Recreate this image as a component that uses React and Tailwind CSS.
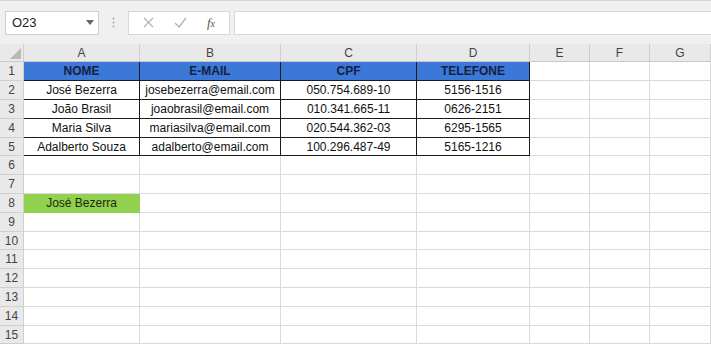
import { useState } from "react";

const cols = [
  { name: "A", w: "w-[116px]" },
  { name: "B", w: "w-[141px]" },
  { name: "C", w: "w-[136px]" },
  { name: "D", w: "w-[113px]" },
  { name: "E", w: "w-[60px]" },
  { name: "F", w: "w-[60px]" },
  { name: "G", w: "w-[61px]" },
];

const rowHeights = ["h-[19px]", "h-[19px]", "h-[19px]", "h-[19px]", "h-[18px]"];

const data = [
  ["NOME", "E-MAIL", "CPF", "TELEFONE"],
  ["José Bezerra", "josebezerra@email.com", "050.754.689-10", "5156-1516"],
  ["João Brasil", "joaobrasil@email.com", "010.341.665-11", "0626-2151"],
  ["Maria Silva", "mariasilva@email.com", "020.544.362-03", "6295-1565"],
  ["Adalberto Souza", "adalberto@email.com", "100.296.487-49", "5165-1216"],
];

function Cell({ row, col, value }) {
  let cls = "border-r border-b border-[#dadada] bg-white text-[#111]";
  if (row === 1 && col < 4) {
    cls = "border-r border-b border-[#1b1b1b] bg-[#3b78d8] font-bold text-[#14213d]";
  } else if (row >= 2 && row <= 5 && col < 4) {
    cls = "border-r border-b border-[#1b1b1b] bg-white text-[#111]";
  } else if (row === 8 && col === 0) {
    cls = "border-r border-b border-[#92d050] bg-[#92d050] text-[#1a2a0a]";
  }
  return (
    <div className={`${cols[col].w} shrink-0 flex items-center justify-center ${cls}`}>
      {value}
    </div>
  );
}

export default function App() {
  const [cellRef] = useState("O23");
  const rows = Array.from({ length: 15 }, (_, i) => i + 1);

  return (
    <div className="w-[711px] h-[346px] overflow-hidden bg-white text-[12px] font-['Liberation_Sans',Arial,sans-serif]">
      {/* formula bar */}
      <div className="h-[44px] bg-[#f0f0f0] border-t border-[#d6d6d6] flex items-center pl-[5px] gap-0">
        <div className="w-[94px] h-[24px] bg-white border border-[#d0d0d0] flex items-center justify-between pl-[6px] pr-[4px] text-[13px] text-[#222]">
          <span>{cellRef}</span>
          <svg width="8" height="5" viewBox="0 0 8 5"><path d="M0 0h8L4 5z" fill="#666" /></svg>
        </div>
        <div className="w-[29px] flex justify-center">
          <svg width="3" height="11" viewBox="0 0 3 11">
            <circle cx="1.5" cy="1.5" r="1" fill="#aaa" />
            <circle cx="1.5" cy="5.5" r="1" fill="#aaa" />
            <circle cx="1.5" cy="9.5" r="1" fill="#aaa" />
          </svg>
        </div>
        <div className="w-[102px] h-[24px] bg-white border border-[#d8d8d8] flex items-center justify-around px-[4px]">
          <svg width="11" height="11" viewBox="0 0 11 11"><path d="M1 1l9 9M10 1l-9 9" stroke="#b5b5b5" strokeWidth="1.3" /></svg>
          <svg width="13" height="11" viewBox="0 0 13 11"><path d="M1 6l4 4 7-9" stroke="#b5b5b5" strokeWidth="1.4" fill="none" /></svg>
          <span className="font-['Liberation_Serif',serif] italic text-[13px] text-[#555]">f<span className="text-[10px]">x</span></span>
        </div>
        <div className="ml-[4px] flex-1 h-[24px] bg-white border border-[#d8d8d8] border-r-0" />
      </div>

      {/* column headers */}
      <div className="flex h-[18px] bg-[#e9e9e9] border-b border-[#c8c8c8] text-[#444]">
        <div className="w-[24px] shrink-0 border-r border-[#cfcfcf] relative">
          <svg className="absolute right-[2px] bottom-[2px]" width="11" height="11" viewBox="0 0 11 11"><path d="M11 0v11H0z" fill="#b8b8b8" /></svg>
        </div>
        {cols.map((c) => (
          <div key={c.name} className={`${c.w} shrink-0 border-r border-[#cfcfcf] flex items-center justify-center`}>
            {c.name}
          </div>
        ))}
      </div>

      {/* rows */}
      {rows.map((r, i) => (
        <div key={r} className={`flex ${rowHeights[i % 5]}`}>
          <div className="w-[24px] shrink-0 bg-[#e9e9e9] border-r border-b border-[#cfcfcf] text-[#444] flex items-center justify-center">
            {r}
          </div>
          {cols.map((c, ci) => {
            let value = "";
            if (r <= 5 && ci < 4) value = data[r - 1][ci];
            if (r === 8 && ci === 0) value = "José Bezerra";
            return <Cell key={c.name} row={r} col={ci} value={value} />;
          })}
        </div>
      ))}
    </div>
  );
}
